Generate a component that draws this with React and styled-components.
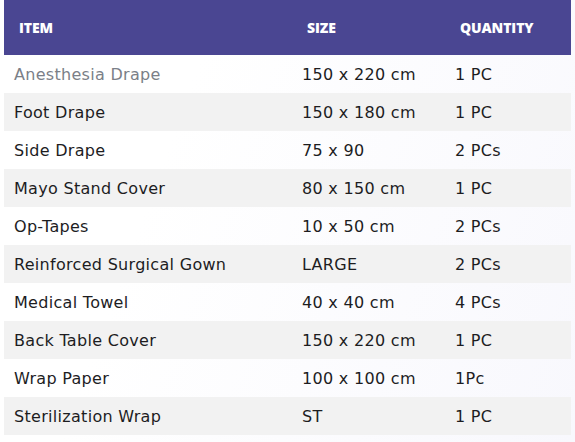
import styled, { createGlobalStyle } from 'styled-components';

const GlobalStyle = createGlobalStyle`
  html, body {
    margin: 0;
    padding: 0;
    background: #fff;
  }
  body {
    font-family: 'DejaVu Sans', 'Liberation Sans', sans-serif;
  }
`;

const items = [
  { name: 'Anesthesia Drape', size: '150 x 220 cm', qty: '1 PC', muted: true },
  { name: 'Foot Drape', size: '150 x 180 cm', qty: '1 PC' },
  { name: 'Side Drape', size: '75 x 90', qty: '2 PCs' },
  { name: 'Mayo Stand Cover', size: '80 x 150 cm', qty: '1 PC' },
  { name: 'Op-Tapes', size: '10 x 50 cm', qty: '2 PCs' },
  { name: 'Reinforced Surgical Gown', size: 'LARGE', qty: '2 PCs' },
  { name: 'Medical Towel', size: '40 x 40 cm', qty: '4 PCs' },
  { name: 'Back Table Cover', size: '150 x 220 cm', qty: '1 PC' },
  { name: 'Wrap Paper', size: '100 x 100 cm', qty: '1Pc' },
  { name: 'Sterilization Wrap', size: 'ST', qty: '1 PC' },
];

const App = () => {
  return (
    <Page>
      <GlobalStyle />
      <Table>
        <HeadRow>
          <HeadCell>Item</HeadCell>
          <HeadCell>Size</HeadCell>
          <HeadCell>Quantity</HeadCell>
        </HeadRow>
        {items.map(({ name, size, qty, muted }, index) => (
          <Row key={name} index={index}>
            <Cell muted={muted}>{name}</Cell>
            <Cell>{size}</Cell>
            <Cell>{qty}</Cell>
          </Row>
        ))}
      </Table>
    </Page>
  );
};

export default App;

const Page = styled.div`
  width: 575px;
  height: 442px;
  padding: 0 4px;
  box-sizing: border-box;
  background: linear-gradient(110deg, #ffffff 30%, #f8f8fd 100%);
`;

const Table = styled.div`
  display: flex;
  flex-direction: column;
`;

const HeadRow = styled.div`
  display: grid;
  grid-template-columns: 288px 153px 1fr;
  height: 55px;
  align-items: center;
  background-color: #4a4692;
`;

const HeadCell = styled.div`
  padding-left: 15px;
  color: #fff;
  font-family: 'Open Sans', sans-serif;
  font-weight: 800;
  font-size: 14px;
  text-transform: uppercase;
  letter-spacing: -0.1px;
`;

const Row = styled.div`
  display: grid;
  grid-template-columns: 288px 153px 1fr;
  height: 38px;
  align-items: center;
  background-color: ${({ index }) => (index % 2 !== 0 ? '#f2f2f2' : 'transparent')};
`;

const Cell = styled.div`
  padding-left: 10px;
  padding-top: 1px;
  font-size: 16px;
  letter-spacing: 0.3px;
  color: ${({ muted }) => (muted ? '#7b7f88' : '#1d1d1f')};
  white-space: nowrap;
`;
